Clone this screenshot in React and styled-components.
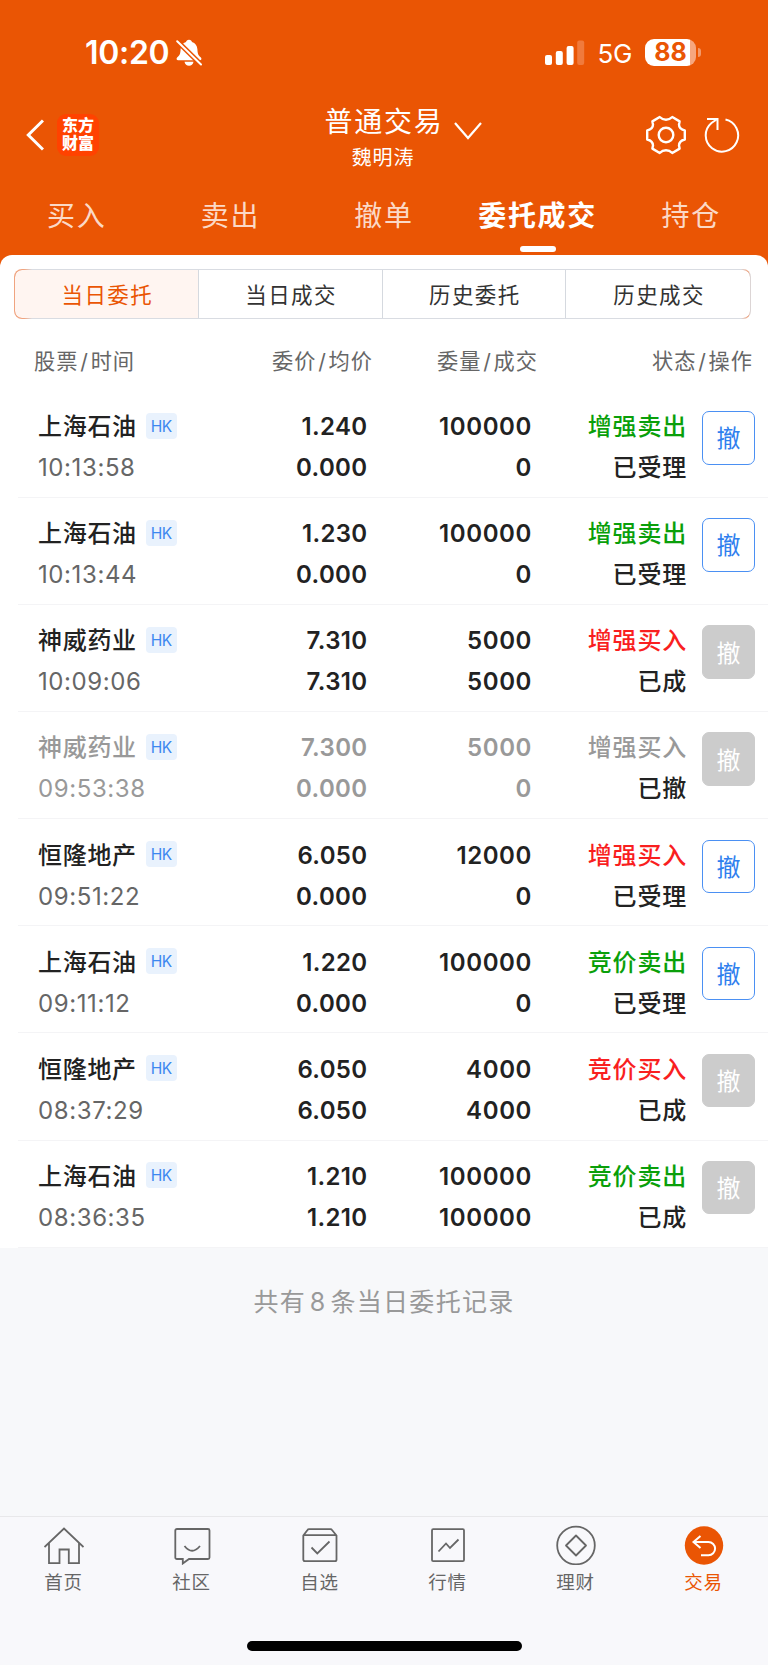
import React, { useState } from 'react';
import styled, { createGlobalStyle } from 'styled-components';

const GlobalStyle = createGlobalStyle`
  * {
    box-sizing: border-box;
  }

  body {
    margin: 0;
    background-color: #f7f8fa;
    font-family: Inter, 'Noto Sans CJK SC', sans-serif;
  }

  button {
    padding: 0;
    border: none;
    background: none;
    font-family: inherit;
    cursor: pointer;
  }
`

const Page = styled.div`
  width: 768px;
  height: 1665px;
  display: flex;
  flex-direction: column;
  background-color: #f7f8fa;
  overflow: hidden;
`

const Top = styled.header`
  height: 255px;
  flex: none;
  background-color: #ea5504;
  color: #fff;
`

const StatusBar = styled.div`
  height: 105px;
  padding: 0 67px 0 85px;
  display: flex;
  align-items: center;
`

const Clock = styled.span`
  font-size: 32px;
  font-weight: 600;
  letter-spacing: -0.3px;
  line-height: 40px;
  margin-right: 7px;
`

const StatusRight = styled.div`
  margin-left: auto;
  display: flex;
  align-items: center;
`

const Network = styled.span`
  margin: 2px 13px 0 12px;
  font-size: 26px;
  line-height: 32px;
  letter-spacing: -0.3px;
`

const Battery = styled.div`
  width: 51px;
  height: 27px;
  border-radius: 9px;
  background: linear-gradient(90deg, #fff 45px, #f6a67f 45px);
  color: #ea5504;
  font-size: 25px;
  font-weight: 700;
  line-height: 27px;
  text-align: center;
`

const BatteryTip = styled.div`
  width: 3px;
  height: 9px;
  margin-left: 2px;
  border-radius: 0 4px 4px 0;
  background-color: #f3996b;
`

const NavBar = styled.div`
  height: 70px;
  padding: 0 28px 0 26px;
  display: grid;
  grid-template-columns: 1fr auto 1fr;
  align-items: center;
`

const NavLeft = styled.div`
  display: flex;
  align-items: center;
  gap: 13px;
  margin-top: -10px;
`

const Logo = styled.div`
  width: 42px;
  height: 42px;
  padding-top: 3px;
  border-radius: 9px;
  background-color: #ff4200;
  font-size: 16px;
  font-weight: 800;
  line-height: 17.5px;
  text-align: center;
`

const Account = styled.div`
  display: flex;
  flex-direction: column;
  align-items: center;
  margin: -2px 0 0;
`

const AccountTitle = styled.button`
  display: flex;
  align-items: center;
  color: #fff;
  font-size: 28px;
  letter-spacing: 1.8px;
  line-height: 38px;

  /* the chevron hangs outside so that the name stays centred */
  svg {
    margin: 18px -40px 0 10px;
  }
`

const AccountName = styled.div`
  font-size: 20px;
  letter-spacing: 0.9px;
  line-height: 34px;
`

const NavRight = styled.div`
  display: flex;
  align-items: center;
  justify-content: flex-end;
  gap: 18px;
  margin-top: -10px;
`

const Tabs = styled.nav`
  height: 80px;
  display: grid;
  grid-template-columns: repeat(5, 1fr);
`

const Tab = styled.button`
  padding-top: 22px;
  display: flex;
  flex-direction: column;
  align-items: center;
  color: ${props => props.$active ? '#fff' : '#fbd9c7'};
  font-size: 28px;
  font-weight: ${props => props.$active ? 700 : 400};
  letter-spacing: 1.7px;
  line-height: 38px;
  white-space: nowrap;

  &::after {
    content: '';
    width: 36px;
    height: 6px;
    margin-top: 11px;
    border-radius: 3px;
    background-color: ${props => props.$active ? '#fff' : 'transparent'};
  }
`

const PanelBack = styled.div`
  flex: none;
  background: linear-gradient(#ea5504 20px, transparent 20px);
`

const Panel = styled.main`
  padding-top: 14px;
  border-radius: 12px 12px 0 0;
  background-color: #fff;
`

const Segments = styled.div`
  height: 50px;
  margin: 0 17px 0 14px;
  display: grid;
  grid-template-columns: repeat(4, 1fr);
  border: 1px solid transparent;
  border-radius: 8px;
  background:
    linear-gradient(90deg, #f0a480 10px, #d9dce2 18px, #d9dce2 calc(100% - 10px), #f0a480 calc(100% - 3px), #dcd5d5 calc(100% - 1px)) border-box;
  overflow: hidden;
`

const Segment = styled.button`
  padding: 0 0 2px 2px;
  color: ${props => props.$active ? '#ea5504' : '#333'};
  background-color: ${props => props.$active ? '#fff5f1' : '#fff'};
  border-right: 1px solid #d5d9df;
  font-size: 21.5px;
  letter-spacing: 1.4px;

  &:first-child {
    border-radius: 7px 0 0 7px;
  }

  &:last-child {
    border-right: none;
    border-radius: 0 7px 7px 0;
  }
`

const Columns = styled.div`
  display: grid;
  grid-template-columns: ${props => props.$head ? '160px 179px 165px 215px' : '150px 179.5px 164.5px 155px 69px'};
`

const ListHead = styled(Columns)`
  height: 71.7px;
  padding: 13px 0 0 34px;
  color: #666;
  font-size: 21.2px;
  letter-spacing: 1px;
  line-height: 58px;
`

const HeadCell = styled.div`
  text-align: ${props => props.$align || 'right'};
  white-space: nowrap;

  i {
    font-style: normal;
    margin: 0 1.8px;
  }
`

const Order = styled.div`
  height: 107.14px;
  margin-left: 18px;
  border-bottom: 1px solid #f4f4f6;
`

const OrderGrid = styled(Columns)`
  padding: 15.4px 0 0 20px;
`

const Cell = styled.div`
  display: flex;
  flex-direction: column;
  align-items: ${props => props.$align || 'flex-end'};
  color: ${props => props.$muted ? '#999' : '#222'};
  font-size: 24px;
  font-weight: 600;
  line-height: 41px;
  letter-spacing: ${props => props.$tight ? '0.35px' : '0.6px'};
  white-space: nowrap;
`

const StockName = styled.div`
  display: flex;
  align-items: center;
  font-size: 24px;
  font-weight: 500;
  letter-spacing: 0.7px;
`

const Market = styled.span`
  width: 31px;
  height: 26px;
  margin: -2px 0 0 9px;
  border-radius: 4px;
  background-color: #e9f2fd;
  color: #3c87f0;
  font-size: 15.5px;
  font-weight: 400;
  line-height: 27px;
  letter-spacing: -0.5px;
  text-align: center;
`

const Time = styled.div`
  color: ${props => props.$muted ? '#999' : '#666'};
  font-weight: 400;
  letter-spacing: 0.6px;
`

const Side = styled.div`
  color: ${props => props.$muted ? '#999' : props.$sell ? '#0a9f0a' : '#f91f1f'};
  font-weight: 500;
  letter-spacing: 0.8px;
`

const State = styled.div`
  color: #222;
  font-weight: 500;
  letter-spacing: 0.8px;
`

const CancelButton = styled.button`
  width: 53px;
  height: 53.5px;
  margin: 5px 0 0 15px;
  padding-bottom: 2px;
  border: 1px solid ${props => props.disabled ? '#ccc' : '#4b90f3'};
  border-radius: 7px;
  background-color: ${props => props.disabled ? '#ccc' : '#fff'};
  color: ${props => props.disabled ? '#fff' : '#2f80ee'};
  font-size: 24px;
`

const Summary = styled.p`
  margin: 0;
  padding-top: 35px;
  flex: 1;
  color: #999;
  font-size: 25px;
  letter-spacing: 1.3px;
  word-spacing: -4.5px;
  line-height: 38px;
  text-align: center;
`

const BottomBar = styled.footer`
  height: 149px;
  flex: none;
  border-top: 1px solid #e8e8ea;
  background-color: #f8f8fb;
`

const BottomTabs = styled.nav`
  height: 124px;
  display: grid;
  grid-template-columns: repeat(6, 1fr);
`

const BottomTab = styled.button`
  padding-top: 7.5px;
  display: flex;
  flex-direction: column;
  align-items: center;
  color: ${props => props.$active ? '#ea5504' : '#666'};
  font-size: 18.5px;
  letter-spacing: 0.8px;
  line-height: 26px;

  svg {
    margin-bottom: 4.5px;
  }
`

const BottomLabel = styled.span`
  margin-right: 1px;
`

const HomeIndicator = styled.div`
  width: 275px;
  height: 10px;
  margin: 0 auto;
  border-radius: 5px;
  background-color: #000;
`

const BellOff = () => (
  <svg width="26" height="28" viewBox="0 0 26 28">
    <path d="M13 0.800c-1.700 0-2.800 1-3 2.300-3.300 1.100-5.200 3.700-5.400 7.200-.2 4.800-1 6.200-3.500 8.200-.9.800-.7 2.800 1 2.800h21.800c1.700 0 1.900-2 1-2.800-2.500-2-3.300-3.400-3.500-8.200-.2-3.500-2.100-6.100-5.400-7.200-.2-1.300-1.300-2.300-3-2.300z" fill="#fff" />
    <path d="M8.500 22.800h9c-.5 2.500-2.200 4-4.500 4s-4-1.500-4.500-4z" fill="#fff" />
    <path d="M0 1L26 26.500" stroke="#ea5504" strokeWidth="5" />
    <path d="M1.200 2.200L25 25.500" stroke="#fff" strokeWidth="2" strokeLinecap="round" />
  </svg>
)

const Signal = () => (
  <svg width="40" height="26" viewBox="0 0 40 26" fill="#fff">
    <rect x="0" y="15" width="7" height="10" rx="2" />
    <rect x="10.800" y="11" width="7" height="14" rx="2" />
    <rect x="21.600" y="6" width="7" height="19" rx="2" />
    <rect x="32.200" y="0.500" width="7" height="24.500" rx="2" fill="#f07a3c" />
  </svg>
)

const Back = () => (
  <svg width="18" height="32" viewBox="0 0 18 32" fill="none" stroke="#fff" strokeWidth="3">
    <path d="M17 1.500L2.300 16L17 30.500" />
  </svg>
)

const ChevronDown = () => (
  <svg width="28" height="18" viewBox="0 0 28 18" fill="none" stroke="#fff" strokeWidth="2.200">
    <path d="M1 1L14 16L27 1" />
  </svg>
)

const Gear = () => (
  <svg width="40" height="40" viewBox="-20 -20 40 40" fill="none" stroke="#fff" strokeWidth="2.400">
    <circle r="7.300" />
    {/* six flat teeth with rounded valleys between them */}
    <path
      strokeLinejoin="round"
      d="M18.800 -4.500V4.500Q13 6 13 10.500L13.600 13.600L6.300 18Q3.500 15.200 0 15.200T-6.300 18L-13.600 13.600L-13 10.500Q-13 6 -18.800 4.500V-4.500Q-13 -6 -13 -10.500L-13.600 -13.600L-6.300 -18Q-3.500 -15.200 0 -15.200T6.300 -18L13.600 -13.600L13 -10.500Q13 -6 18.800 -4.500Z"
    />
  </svg>
)

const Refresh = () => (
  <svg width="36" height="36" viewBox="0 0 36 36" fill="none" stroke="#fff" strokeWidth="2">
    <path d="M21.500 2.600A16.200 16.200 0 1 1 7.500 6L13.300 2" />
    <path d="M3 2H13.500V13" />
  </svg>
)

const HomeIcon = () => (
  <svg width="40" height="40" viewBox="0 0 40 40" fill="none" stroke="#666" strokeWidth="1.800">
    <path d="M0.500 22L20 3.500L39.500 22M5 18V38.200H15.500V24.500H24.800V38.200H35V18" />
  </svg>
)

const ChatIcon = () => (
  <svg width="40" height="40" viewBox="0 0 40 40" fill="none" stroke="#666" strokeWidth="1.800">
    <path d="M5 4H36Q37.500 4 37.500 5.500V32.500Q37.500 34 36 34H17L10.800 38.500V34H5Q3.300 34 3.300 32.500V5.500Q3.300 4 5 4Z" />
    <path d="M12.500 21Q20 30.500 28 21" />
  </svg>
)

const BoxIcon = () => (
  <svg width="40" height="40" viewBox="0 0 40 40" fill="none" stroke="#666" strokeWidth="1.800">
    <path d="M3.300 10.500L7.500 5Q8 4.200 9 4.200H30.500Q31.500 4.200 32 5L36.500 10.500V34.500Q36.500 36.200 35 36.200H5Q3.300 36.200 3.300 34.500ZM3.300 10.200H36.500M11.500 22.500L17.300 28.500L29.500 16.500" />
  </svg>
)

const ChartIcon = () => (
  <svg width="40" height="40" viewBox="0 0 40 40" fill="none" stroke="#666" strokeWidth="1.800">
    <rect x="4" y="4.200" width="32" height="32" rx="1.200" />
    <path d="M10.500 26.500L18 18.500L22 23L30.500 14.500" />
  </svg>
)

const CoinIcon = () => (
  <svg width="40" height="40" viewBox="0 0 40 40" fill="none" stroke="#666" strokeWidth="1.800">
    <circle cx="20" cy="20.500" r="18.800" />
    <path d="M20 10.500L30 20.500L20 30.500L10 20.500Z" strokeLinejoin="round" />
  </svg>
)

const TradeIcon = () => (
  <svg width="40" height="40" viewBox="0 0 40 40" fill="none" stroke="#fff" strokeWidth="2">
    <circle cx="20" cy="20.500" r="19.200" fill="#ea5504" stroke="none" />
    <path d="M16.500 11L9.500 17L16.500 23M9.500 17H24.500A6.500 6.500 0 0 1 24.500 30.200H17" />
  </svg>
)

const tabs = ['买入', '卖出', '撤单', '委托成交', '持仓'];
const segments = ['当日委托', '当日成交', '历史委托', '历史成交'];

const bottomTabs = [
  { label: '首页', Icon: HomeIcon },
  { label: '社区', Icon: ChatIcon },
  { label: '自选', Icon: BoxIcon },
  { label: '行情', Icon: ChartIcon },
  { label: '理财', Icon: CoinIcon },
  { label: '交易', Icon: TradeIcon },
];

const orders = [
  { name: '上海石油', time: '10:13:58', price: '1.240', avg: '0.000', qty: 100000, filled: 0, side: '增强卖出', state: '已受理' },
  { name: '上海石油', time: '10:13:44', price: '1.230', avg: '0.000', qty: 100000, filled: 0, side: '增强卖出', state: '已受理' },
  { name: '神威药业', time: '10:09:06', price: '7.310', avg: '7.310', qty: 5000, filled: 5000, side: '增强买入', state: '已成' },
  { name: '神威药业', time: '09:53:38', price: '7.300', avg: '0.000', qty: 5000, filled: 0, side: '增强买入', state: '已撤' },
  { name: '恒隆地产', time: '09:51:22', price: '6.050', avg: '0.000', qty: 12000, filled: 0, side: '增强买入', state: '已受理' },
  { name: '上海石油', time: '09:11:12', price: '1.220', avg: '0.000', qty: 100000, filled: 0, side: '竞价卖出', state: '已受理' },
  { name: '恒隆地产', time: '08:37:29', price: '6.050', avg: '6.050', qty: 4000, filled: 4000, side: '竞价买入', state: '已成' },
  { name: '上海石油', time: '08:36:35', price: '1.210', avg: '1.210', qty: 100000, filled: 100000, side: '竞价卖出', state: '已成' },
];

const OrderRow = ({ order }) => {
  const muted = order.state === '已撤';
  return (
    <Order>
      <OrderGrid>
        <Cell $align='flex-start' $muted={muted}>
          <StockName>{order.name}<Market>HK</Market></StockName>
          <Time $muted={muted}>{order.time}</Time>
        </Cell>
        <Cell $muted={muted} $tight>
          <div>{order.price}</div>
          <div>{order.avg}</div>
        </Cell>
        <Cell $muted={muted}>
          <div>{order.qty}</div>
          <div>{order.filled}</div>
        </Cell>
        <Cell>
          <Side $muted={muted} $sell={order.side.endsWith('卖出')}>{order.side}</Side>
          <State>{order.state}</State>
        </Cell>
        <CancelButton disabled={order.state !== '已受理'}>撤</CancelButton>
      </OrderGrid>
    </Order>
  );
};

const App = () => {
  const [tab, setTab] = useState('委托成交');
  const [segment, setSegment] = useState('当日委托');

  return (
    <Page>
      <GlobalStyle />
      <Top>
        <StatusBar>
          <Clock>10:20</Clock>
          <BellOff />
          <StatusRight>
            <Signal />
            <Network>5G</Network>
            <Battery>88</Battery>
            <BatteryTip />
          </StatusRight>
        </StatusBar>
        <NavBar>
          <NavLeft>
            <Back />
            <Logo>东方<br />财富</Logo>
          </NavLeft>
          <Account>
            <AccountTitle>普通交易<ChevronDown /></AccountTitle>
            <AccountName>魏明涛</AccountName>
          </Account>
          <NavRight>
            <Gear />
            <Refresh />
          </NavRight>
        </NavBar>
        <Tabs>
          {tabs.map(name => (
            <Tab key={name} $active={name === tab} onClick={() => setTab(name)}>{name}</Tab>
          ))}
        </Tabs>
      </Top>
      <PanelBack>
        <Panel>
          <Segments>
            {segments.map(name => (
              <Segment key={name} $active={name === segment} onClick={() => setSegment(name)}>{name}</Segment>
            ))}
          </Segments>
          <ListHead $head>
            <HeadCell $align='left'>股票<i>/</i>时间</HeadCell>
            <HeadCell>委价<i>/</i>均价</HeadCell>
            <HeadCell>委量<i>/</i>成交</HeadCell>
            <HeadCell>状态<i>/</i>操作</HeadCell>
          </ListHead>
          {orders.map(order => (
            <OrderRow key={order.time} order={order} />
          ))}
        </Panel>
      </PanelBack>
      <Summary>共有 {orders.length} 条当日委托记录</Summary>
      <BottomBar>
        <BottomTabs>
          {bottomTabs.map(({ label, Icon }) => (
            <BottomTab key={label} $active={label === '交易'}>
              <Icon />
              <BottomLabel>{label}</BottomLabel>
            </BottomTab>
          ))}
        </BottomTabs>
        <HomeIndicator />
      </BottomBar>
    </Page>
  );
};

export default App;
